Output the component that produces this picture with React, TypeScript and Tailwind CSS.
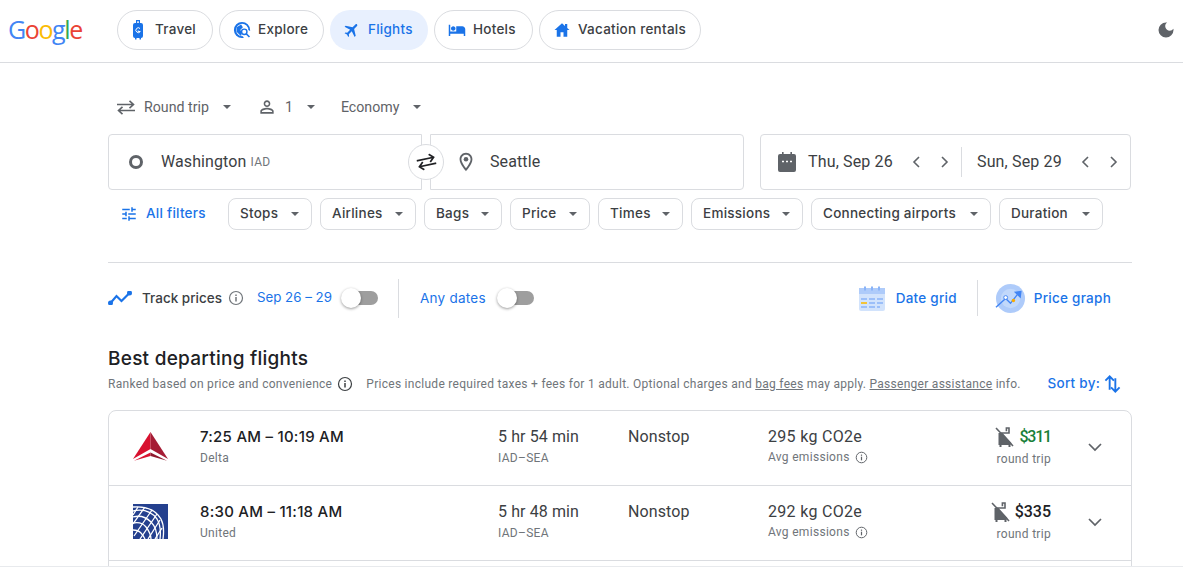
import React from 'react';

const sans = 'font-["Roboto",sans-serif]';
const label = 'font-["Inter",sans-serif] tracking-[0.25px]';

type IconProps = { className?: string };

function Caret({ className = 'text-[#5f6368]' }: IconProps) {
  return (
    <svg viewBox="0 0 8 4" className={`w-2 h-1 shrink-0 fill-current ${className}`}>
      <path d="M0 0l4 4 4-4z" />
    </svg>
  );
}

function Icon24({ d, className = '' }: { d: string; className?: string }) {
  return (
    <svg viewBox="0 0 24 24" className={`fill-current shrink-0 ${className}`}>
      <path d={d} />
    </svg>
  );
}

function Info({ className = 'w-4 h-4 text-[#5f6368]' }: IconProps) {
  return (
    <svg viewBox="0 0 16 16" className={`shrink-0 ${className}`} fill="none" stroke="currentColor">
      <circle cx="8" cy="8" r="6.5" strokeWidth="1.2" />
      <path d="M8 7v4.5" strokeWidth="1.5" />
      <path d="M8 4.4v1.5" strokeWidth="1.5" />
    </svg>
  );
}

function SwapArrows({ className = '' }: IconProps) {
  return (
    <svg viewBox="0 0 18 15" className={`shrink-0 ${className}`} fill="none" stroke="currentColor" strokeWidth="1.6">
      <path d="M0 4.5h16.5M12.5 0.8l4 3.7-4 3.7" />
      <path d="M18 10.5H1.5M5.5 6.8l-4 3.7 4 3.7" />
    </svg>
  );
}

function NoBag({ className = '' }: IconProps) {
  return (
    <svg viewBox="0 0 20 22" className={`w-5 h-[22px] shrink-0 ${className}`}>
      <path d="M6 7h8v-5h-2.6v3.2" fill="none" stroke="#5f6368" strokeWidth="1.6" />
      <path d="M3.5 7h4l9 10v1.5h-1v2.5h-2v-2h-7v2h-2v-2h-1z" fill="#5f6368" />
      <path d="M1 2l17 18" stroke="#5f6368" strokeWidth="1.6" />
    </svg>
  );
}

function Chip({ text, width }: { text: string; width: string }) {
  return (
    <button className={`h-8 ${width} flex items-center justify-between pl-[11px] pr-[12px] border border-[#dadce0] rounded-lg ${label} text-[13.5px] font-[450] text-[#3c4043]`}>
      <span className="mb-[2px]">{text}</span>
      <Caret />
    </button>
  );
}

function NavPill({ icon, text, active, width }: { icon: React.ReactNode; text: string; active?: boolean; width: string }) {
  return (
    <a className={`h-10 ${width} flex items-center pl-[15px] gap-[10px] rounded-full ${active ? 'bg-[#e8f0fe] text-[#1a73e8]' : 'border border-[#dadce0] text-[#3c4043]'} ${label} text-[13.5px] font-[450]`}>
      {icon}
      <span className="mb-[2px]">{text}</span>
    </a>
  );
}

function Toggle() {
  return (
    <div className="relative w-[29px] h-[14px] rounded-full bg-[#9e9e9e]">
      <div className="absolute -left-[8px] -top-[3px] w-5 h-5 rounded-full bg-white shadow-[0_1px_3px_rgba(0,0,0,0.4)]" />
    </div>
  );
}

function DeltaLogo() {
  return (
    <svg viewBox="0 0 35 29" className="w-[35px] h-[29px]">
      <path d="M17.5 0L0 27 17.5 17z" fill="#d8112f" />
      <path d="M17.5 0L35 27 17.5 17z" fill="#a51c35" />
      <path d="M1 28.7L17.5 20.5V24z" fill="#d8112f" />
      <path d="M34 28.7L17.5 20.5V24z" fill="#8e1a2e" />
    </svg>
  );
}

function UnitedLogo() {
  return (
    <svg viewBox="0 0 35 35" className="w-[35px] h-[35px]">
      <rect width="35" height="35" fill="#24408e" />
      <g fill="none" stroke="#fff" strokeWidth="1.3">
        <path d="M0 7c9-2 18 0 24 8 3 5 4 12 3 20" />
        <path d="M0 3c11-1 22 2 28 12 3 6 3 13 2 20" />
        <path d="M0 13c7-2 13 0 18 5s6 11 6 17" />
        <path d="M0 19c5-1 10 0 13 4s5 8 5 12" />
        <path d="M0 26c3 0 6 1 8 3s3 4 4 6" />
        <path d="M5 3l-5 8M12 3l-12 17M19 6L1 32M24 10L7 35M27 16L15 35M29 24l-7 11" />
      </g>
    </svg>
  );
}

function DateArrows() {
  return (
    <div className="flex items-center ml-[19px] gap-[21px] shrink-0">
      <svg viewBox="0 0 8 12" className="w-2 h-3" fill="none" stroke="#5f6368" strokeWidth="1.6"><path d="M7 1L2 6l5 5" /></svg>
      <svg viewBox="0 0 8 12" className="w-2 h-3" fill="none" stroke="#5f6368" strokeWidth="1.6"><path d="M1 1l5 5-5 5" /></svg>
    </div>
  );
}

function FlightRow({ logo, times, airline, duration, co2, price, priceClass }: {
  logo: React.ReactNode; times: string; airline: string; duration: string; co2: string; price: string; priceClass: string;
}) {
  return (
    <div className="h-[75px] flex border-b border-[#dadce0]">
      <div className="w-[91px] pl-6 pb-[3px] flex items-center">{logo}</div>
      <div className="w-[298px] pt-[15px]">
        <div className={`${label} text-[15px] leading-[22px] font-[450] text-[#202124]`}>{times}</div>
        <div className="text-xs leading-4 mt-[2px] tracking-[0.3px] text-[#70757a]">{airline}</div>
      </div>
      <div className="w-[130px] pt-[15px]">
        <div className="text-base leading-[22px] tracking-[0.1px] text-[#3c4043]">{duration}</div>
        <div className="text-xs leading-4 mt-[2px] tracking-[0.3px] text-[#70757a]">IAD–SEA</div>
      </div>
      <div className="w-[140px] pt-[15px] text-base leading-[22px] tracking-[0.1px] text-[#3c4043]">Nonstop</div>
      <div className="w-[180px] pt-[15px]">
        <div className="text-base leading-[22px] tracking-[0.3px] text-[#3c4043]">{co2}</div>
        <div className="flex items-center gap-[5px] text-xs leading-4 tracking-[0.3px] text-[#70757a] mt-[1px]">
          Avg emissions
          <Info className="w-[13px] h-[13px] text-[#5f6368]" />
        </div>
      </div>
      <div className="w-[103px] pt-[15px] flex flex-col items-end">
        <div className={`flex items-center gap-1 text-base leading-[22px] font-medium ${priceClass}`}>
          <NoBag />
          {price}
        </div>
        <div className="text-xs leading-4 mt-[3px] tracking-[0.3px] text-[#70757a]">round trip</div>
      </div>
      <div className="flex-1 flex items-center pl-[37px] pb-[2px]">
        <svg viewBox="0 0 14 9" className="w-[14px] h-[9px]" fill="none" stroke="#5f6368" strokeWidth="1.7">
          <path d="M1 1l6 6 6-6" />
        </svg>
      </div>
    </div>
  );
}

export default function App() {
  return (
    <div className={`relative w-[1183px] h-[567px] overflow-hidden bg-white ${sans}`}>
      <header className="h-[63px] pt-[10px] pl-[8px] pr-[7px] flex border-b border-[#dadce0]">
        <div className={`w-[109px] h-10 flex items-center font-["Open_Sans",sans-serif] text-[25px] tracking-[-1.4px]`}>
          <span className="text-[#4285f4]">G</span>
          <span className="text-[#ea4335]">o</span>
          <span className="text-[#fbbc05]">o</span>
          <span className="text-[#4285f4]">g</span>
          <span className="text-[#34a853]">l</span>
          <span className="text-[#ea4335]">e</span>
        </div>
        <nav className="flex gap-[6px]">
          <NavPill
            width="w-[96px]"
            text="Travel"
            icon={
              <svg viewBox="0 0 12 20" className="w-3 h-5 shrink-0 fill-[#1a73e8] -ml-px mr-px">
                <path d="M4 0h4v3h1a2 2 0 0 1 2 2v11a2 2 0 0 1-2 2v1.5H7.5V18h-3v1.5H3V18a2 2 0 0 1-2-2V5a2 2 0 0 1 2-2h1zM5.2 1.2V3h1.6V1.2z" />
                <path d="M8 8.5a2.4 2.4 0 1 0 .3 3H6.2v-1" fill="none" stroke="#fff" strokeWidth="1" />
              </svg>
            }
          />
          <NavPill
            width="w-[105px]"
            text="Explore"
            icon={
              <svg viewBox="0 0 20 20" className="w-[18px] h-[18px] shrink-0 -ml-[2px] -mr-[3px]">
                <path d="M10 1a9 9 0 1 0 0 18h2l-1-2a7 7 0 0 1-1-14 7 7 0 0 1 7 7l2 1v-1a9 9 0 0 0-9-9z" fill="#1a73e8" />
                <path d="M4 7l5-3 2 3-3 3 2 2-1 5-5-5z" fill="#1a73e8" />
                <circle cx="12.5" cy="12" r="3" fill="none" stroke="#1a73e8" strokeWidth="1.6" />
                <path d="M14.7 14.2l3.6 3.6" stroke="#1a73e8" strokeWidth="1.8" />
              </svg>
            }
          />
          <NavPill
            width="w-[98px]"
            active
            text="Flights"
            icon={<Icon24 className="w-[18px] h-[18px] rotate-45 -ml-[2px] -mr-[3px]" d="M21 16v-2l-8-5V3.5c0-.83-.67-1.5-1.5-1.5S10 2.67 10 3.5V9l-8 5v2l8-2.5V19l-2 1.5V22l3.5-1 3.5 1v-1.5L13 19v-5.5l8 2.5z" />}
          />
          <NavPill
            width="w-[99px]"
            text="Hotels"
            icon={<Icon24 className="w-[18px] h-[18px] text-[#1a73e8] -ml-[2px] -mr-[3px]" d="M7 13c1.66 0 3-1.34 3-3S8.66 7 7 7s-3 1.34-3 3 1.34 3 3 3zm12-6h-8v7H3V5H1v15h2v-3h18v3h2v-9c0-2.21-1.79-4-4-4z" />}
          />
          <NavPill
            width="w-[162px]"
            text="Vacation rentals"
            icon={<Icon24 className="w-[18px] h-[18px] text-[#1a73e8] -ml-[2px] -mr-[3px]" d="M12 3L2 12h3v9h5v-6h4v6h5v-9h3l-3-2.7V4h-3v2.6z" />}
          />
        </nav>
        <div className="ml-auto h-10 flex items-center">
          <Icon24 className="w-5 h-5 text-[#5f6368]" d="M12 3a9 9 0 1 0 9 9c0-.46-.04-.92-.1-1.36a5.389 5.389 0 0 1-4.4 2.26 5.403 5.403 0 0 1-3.14-9.8c-.44-.06-.9-.1-1.36-.1z" />
        </div>
      </header>

      <main className="w-[1024px] ml-[108px]">
        <div className="h-[71px] pt-[34px] flex items-start text-[14.2px] leading-5 text-[#5f6368]">
          <SwapArrows className="w-[18px] h-[15px] ml-[9px] mt-[3px]" />
          <span className="ml-[9px]">Round trip</span>
          <span className="ml-[14px] mt-2"><Caret /></span>
          <Icon24 className="w-5 h-5 ml-[26px]" d="M12 5.9c1.16 0 2.1.94 2.1 2.1s-.94 2.1-2.1 2.1S9.9 9.16 9.9 8s.94-2.1 2.1-2.1m0 9c2.97 0 6.1 1.46 6.1 2.1v1.1H5.9V17c0-.64 3.13-2.1 6.1-2.1M12 4C9.79 4 8 5.79 8 8s1.79 4 4 4 4-1.79 4-4-1.79-4-4-4zm0 9c-2.67 0-8 1.34-8 4v3h16v-3c0-2.66-5.33-4-8-4z" />
          <span className="ml-[8px]">1</span>
          <span className="ml-[14px] mt-2"><Caret /></span>
          <span className="ml-[26px]">Economy</span>
          <span className="ml-[14px] mt-2"><Caret /></span>
        </div>

        <div className="flex h-14">
          <div className="relative w-[314px] flex items-center pl-[20px] border border-[#dadce0] rounded-l-[4px]">
            <div className="w-[14px] h-[14px] rounded-full border-[3px] border-[#5f6368]" />
            <span className="ml-[18px] text-base tracking-[0.1px] text-[#3c4043]">Washington</span>
            <span className="ml-[4px] text-xs tracking-[0.3px] text-[#70757a]">IAD</span>
            <button className="absolute right-[-23px] top-[9px] w-9 h-9 z-10 flex items-center justify-center rounded-full bg-white border border-[#dadce0]">
              <SwapArrows className="w-[19px] h-[16px] text-[#202124] -rotate-[12deg]" />
            </button>
          </div>
          <div className="w-[314px] ml-[8px] flex items-center pl-[25px] border border-[#dadce0] rounded-r-[4px]">
            <svg viewBox="0 0 24 24" className="w-[22px] h-[22px] fill-[#5f6368] -ml-[1px]">
              <path d="M12 2C8.13 2 5 5.13 5 9c0 5.25 7 13 7 13s7-7.75 7-13c0-3.87-3.13-7-7-7zM7 9c0-2.76 2.24-5 5-5s5 2.24 5 5c0 2.88-2.88 7.19-5 9.88C9.92 16.21 7 11.85 7 9z" />
              <circle cx="12" cy="9" r="2.5" />
            </svg>
            <span className="ml-[13px] text-base tracking-[0.1px] text-[#3c4043]">Seattle</span>
          </div>
          <div className="w-[371px] ml-[16px] flex items-center pl-[17px] border border-[#dadce0] rounded-[4px]">
            <svg viewBox="0 0 18 20" className="w-[18px] h-5 shrink-0">
              <path d="M4 0h1.6v2h6.8V0H14v2h2a2 2 0 0 1 2 2v14a2 2 0 0 1-2 2H2a2 2 0 0 1-2-2V4a2 2 0 0 1 2-2h2z" fill="#5f6368" />
              <path d="M4 9.5h2M8 9.5h2M12 9.5h2" stroke="#fff" strokeWidth="1.6" />
            </svg>
            <span className="ml-[12px] w-[85px] whitespace-nowrap text-base tracking-[0.15px] text-[#3c4043]">Thu, Sep 26</span>
            <DateArrows />
            <div className="w-px h-[30px] bg-[#dadce0] ml-[12px]" />
            <span className="ml-[15px] w-[85px] whitespace-nowrap text-base tracking-[0.15px] text-[#3c4043]">Sun, Sep 29</span>
            <DateArrows />
          </div>
        </div>

        <div className="h-8 mt-2 flex items-center gap-2">
          <div className={`w-[112px] flex items-center pl-[12px] ${label} text-[13.5px] font-[450] text-[#1a73e8]`}>
            <Icon24 className="w-[18px] h-[18px]" d="M3 17v2h6v-2H3zM3 5v2h10V5H3zm10 16v-2h8v-2h-8v-2h-2v6h2zM7 9v2H3v2h4v2h2V9H7zm14 4v-2H11v2h10zm-6-4h2V7h4V5h-4V3h-2v6z" />
            <span className="ml-[8px] mb-[2px]">All filters</span>
          </div>
          <Chip text="Stops" width="w-[84px]" />
          <Chip text="Airlines" width="w-[96px]" />
          <Chip text="Bags" width="w-[78px]" />
          <Chip text="Price" width="w-[80px]" />
          <Chip text="Times" width="w-[85px]" />
          <Chip text="Emissions" width="w-[112px]" />
          <Chip text="Connecting airports" width="w-[180px]" />
          <Chip text="Duration" width="w-[104px]" />
        </div>

        <div className="mt-[32px] border-t border-[#dadce0] h-[71px] flex items-center">
          <svg viewBox="0 0 24 14" className="w-[24px] h-[14px] shrink-0" fill="none" stroke="#1a73e8" strokeWidth="2.2">
            <path d="M2.5 12l6-7 5 5 8-8" />
            <circle cx="2.5" cy="12" r="1.4" fill="#1a73e8" />
            <circle cx="21.5" cy="2" r="1.4" fill="#1a73e8" />
          </svg>
          <span className={`ml-[10px] font-["Inter",sans-serif] text-[13.5px] font-[450] text-[#3c4043]`}>Track prices</span>
          <Info className="ml-[6px] w-[16px] h-[16px] text-[#70757a]" />
          <span className={`ml-[13px] font-["Inter",sans-serif] text-[13.3px] text-[#1a73e8]`}>Sep 26 – 29</span>
          <div className="ml-[17px]"><Toggle /></div>
          <div className="w-px h-[39px] bg-[#dadce0] ml-[20px]" />
          <span className={`ml-[21px] ${label} text-[13.5px] text-[#1a73e8]`}>Any dates</span>
          <div className="ml-[19px]"><Toggle /></div>
          <div className="ml-auto flex items-center mr-[21px]">
            <svg viewBox="0 0 28 28" className="w-[28px] h-[28px]">
              <rect x="1" y="4" width="26" height="23" rx="2" fill="#d2e3fc" />
              <rect x="1" y="4" width="26" height="6" fill="#aecbfa" />
              <path d="M7 2.5v4M14 2.5v4M21 2.5v4" stroke="#8ab4f8" strokeWidth="2" />
              <path d="M3 15h6M11 15h6M19 15h6M11 19h6M19 19h6M3 23h6M11 23h6M19 23h3" stroke="#8ab4f8" strokeWidth="1.6" />
              <path d="M3 19h6" stroke="#fbbc04" strokeWidth="1.6" />
            </svg>
            <span className={`ml-[10px] ${label} text-[13.5px] font-[450] text-[#1a73e8]`}>Date grid</span>
            <div className="w-px h-[36px] bg-[#dadce0] ml-[20px]" />
            <svg viewBox="0 0 32 32" className="w-[31px] h-[31px] ml-[17px]">
              <circle cx="16" cy="16" r="15" fill="#aecbfa" />
              <circle cx="16" cy="16" r="10" fill="#d2e3fc" opacity="0.55" />
              <path d="M1 25l10-9 5 5 7-9" fill="none" stroke="#4285f4" strokeWidth="1.4" />
              <path d="M19.5 9l8-1-1 8z" fill="#4285f4" />
              <circle cx="11" cy="15" r="2" fill="#fff" stroke="#4285f4" />
              <circle cx="19" cy="18" r="1.8" fill="#f9ab00" />
            </svg>
            <span className={`ml-[8px] ${label} text-[13.5px] font-[450] text-[#1a73e8]`}>Price graph</span>
          </div>
        </div>

        <h2 className={`${label} text-[19px] leading-6 font-medium text-[#202124] mt-[14px]`}>Best departing flights</h2>
        <div className="h-[27px] -mt-px flex items-center text-xs tracking-[0.28px] text-[#70757a] whitespace-nowrap">
          <span>Ranked based on price and convenience</span>
          <Info className="ml-[5px] w-[16px] h-[16px] text-[#3c4043]" />
          <span className="ml-[13px]">
            Prices include required taxes + fees for 1 adult. Optional charges and <u>bag fees</u> may apply. <u>Passenger assistance</u> info.
          </span>
          <span className={`ml-auto ${label} text-[13.5px] font-[450] text-[#1a73e8]`}>Sort by:</span>
          <svg viewBox="0 0 18 20" className="w-[17px] h-[20px] ml-[4px] mr-[11px] shrink-0" fill="none" stroke="#1a73e8" strokeWidth="2">
            <path d="M6 16V2M1.5 6.5L6 2l4.5 4.5" />
            <path d="M12 4v14M7.5 13.5L12 18l4.5-4.5" />
          </svg>
        </div>

        <div className="mt-[13px] border border-[#dadce0] rounded-t-lg">
          <FlightRow logo={<DeltaLogo />} times="7:25 AM – 10:19 AM" airline="Delta" duration="5 hr 54 min" co2="295 kg CO2e" price="$311" priceClass="text-[#188038] tracking-[-1.2px]" />
          <FlightRow logo={<UnitedLogo />} times="8:30 AM – 11:18 AM" airline="United" duration="5 hr 48 min" co2="292 kg CO2e" price="$335" priceClass="text-[#202124]" />
          <div className="h-10" />
        </div>
      </main>
      <div className="absolute left-0 right-0 bottom-0 h-px bg-[#e8eaed]" />
    </div>
  );
}
